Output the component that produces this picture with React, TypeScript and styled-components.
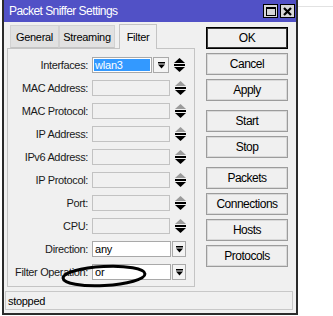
import styled, { createGlobalStyle } from "styled-components";

const GlobalStyle = createGlobalStyle`
  html, body {
    margin: 0;
    padding: 0;
    background: #ffffff;
  }
  body {
    font-family: "Liberation Sans", Arial, sans-serif;
    font-size: 11px;
    color: #000;
  }
`;

type FieldRow = {
  label: string;
  kind: "select" | "text" | "empty";
  value?: string;
  highlighted?: boolean;
  arrows?: "active" | "dim" | null;
};

const rows: FieldRow[] = [
  { label: "Interfaces:", kind: "select", value: "wlan3", highlighted: true, arrows: "active" },
  { label: "MAC Address:", kind: "empty", arrows: "dim" },
  { label: "MAC Protocol:", kind: "empty", arrows: "dim" },
  { label: "IP Address:", kind: "empty", arrows: "dim" },
  { label: "IPv6 Address:", kind: "empty", arrows: "dim" },
  { label: "IP Protocol:", kind: "empty", arrows: "dim" },
  { label: "Port:", kind: "empty", arrows: "dim" },
  { label: "CPU:", kind: "empty", arrows: "dim" },
  { label: "Direction:", kind: "text", value: "any", arrows: null },
  { label: "Filter Operation:", kind: "text", value: "or", arrows: null },
];

const buttonGroups = [
  ["OK", "Cancel", "Apply"],
  ["Start", "Stop"],
  ["Packets", "Connections", "Hosts", "Protocols"],
];

const DropIcon = () => (
  <svg width="7" height="7" viewBox="0 0 7 7">
    <rect x="0" y="0" width="7" height="1.5" fill="#000" />
    <polygon points="0,2.5 7,2.5 3.5,6.5" fill="#000" />
  </svg>
);

const UpDown = ({ dim }: { dim: boolean }) => (
  <svg width="11" height="14" viewBox="0 0 11 14">
    <polygon points="5.5,0 11,5 0,5" fill={dim ? "#9b9b9b" : "#000"} />
    <rect x="0" y="6" width="11" height="2" fill="#000" />
    <polygon points="0,9 11,9 5.5,14" fill="#000" />
  </svg>
);

export default function App() {
  return (
    <>
      <GlobalStyle />
      <Page>
        <Window>
          <TitleBar>
            <Title>Packet Sniffer Settings</Title>
            <TitleButtons>
              <TitleButton>
                <svg width="10" height="9" viewBox="0 0 10 9">
                  <rect x="0.5" y="1" width="9" height="7.5" fill="none" stroke="#000" strokeWidth="1" />
                  <rect x="0" y="0" width="10" height="2" fill="#000" />
                </svg>
              </TitleButton>
              <TitleButton>
                <svg width="9" height="9" viewBox="0 0 9 9">
                  <path d="M1 1 L8 8 M8 1 L1 8" stroke="#000" strokeWidth="2.2" />
                </svg>
              </TitleButton>
            </TitleButtons>
          </TitleBar>

          <Body>
            <LeftCol>
              <TabRow>
                <Tab $w={49}>General</Tab>
                <Tab $w={56}>Streaming</Tab>
                <Tab $w={38} $active>Filter</Tab>
              </TabRow>
              <Panel>
                {rows.map((r) => (
                  <Row key={r.label}>
                    <Label>{r.label}</Label>
                    {r.kind === "select" && (
                      <>
                        <Input $w={60} $bg="#3399ff" $hl>{r.value}</Input>
                        <DropButton $w={16}>
                          <DropIcon />
                        </DropButton>
                      </>
                    )}
                    {r.kind === "text" && (
                      <>
                        <Input $w={79} $bg="#ffffff">{r.value}</Input>
                        <DropButton $w={14}>
                          <DropIcon />
                        </DropButton>
                      </>
                    )}
                    {r.kind === "empty" && <Input $w={78} $bg="#f0f0f0" $muted />}
                    {r.arrows && (
                      <Arrows>
                        <UpDown dim={r.arrows === "dim"} />
                      </Arrows>
                    )}
                  </Row>
                ))}
              </Panel>
            </LeftCol>

            <RightCol>
              {buttonGroups.map((g, i) => (
                <ButtonGroup key={i}>
                  {g.map((b) => (
                    <Button key={b} $default={b === "OK"}>
                      {b}
                    </Button>
                  ))}
                </ButtonGroup>
              ))}
            </RightCol>
          </Body>

          <StatusBar>stopped</StatusBar>

          {/* hand-drawn annotation around Filter Operation */}
          <Mark width="88" height="26" viewBox="0 0 88 26">
            <ellipse cx="44" cy="13" rx="41" ry="9.5" fill="none" stroke="#000" strokeWidth="3" transform="rotate(-3 44 13)" />
          </Mark>
        </Window>
        <Outside />
      </Page>
    </>
  );
}

const Page = styled.div`
  display: flex;
  align-items: flex-start;
  padding-left: 2px;
  width: 333px;
  height: 316px;
  box-sizing: border-box;
`;

const Window = styled.div`
  position: relative;
  width: 296px;
  height: 315px;
  box-sizing: border-box;
  background: #f0f0f0;
  border-left: 2px solid #2b2b2b;
  border-right: 2px solid #2b2b2b;
  border-bottom: 2px solid #2b2b2b;
  display: flex;
  flex-direction: column;
`;

const TitleBar = styled.div`
  height: 22px;
  background: #5151c6;
  display: flex;
  align-items: center;
  padding: 0 1px 0 5px;
`;

const Title = styled.div`
  color: #ffffff;
  font-size: 12px;
  letter-spacing: -0.55px;
  white-space: nowrap;
`;

const TitleButtons = styled.div`
  margin-left: auto;
  display: flex;
  gap: 2px;
  align-self: flex-start;
  margin-top: 4px;
`;

const TitleButton = styled.div`
  width: 15px;
  height: 14px;
  box-sizing: border-box;
  background: #d6d6d6;
  border: 1px solid #000;
  display: flex;
  align-items: center;
  justify-content: center;
`;

const Body = styled.div`
  display: flex;
  gap: 11px;
  padding: 0 0 0 3px;
`;

const LeftCol = styled.div`
  width: 188px;
  display: flex;
  flex-direction: column;
`;

const TabRow = styled.div`
  height: 26px;
  display: flex;
  align-items: flex-end;
  padding-left: 3px;
`;

const Tab = styled.div<{ $w: number; $active?: boolean }>`
  width: ${(p) => p.$w}px;
  height: ${(p) => (p.$active ? 25 : 23)}px;
  margin-left: ${(p) => (p.$active ? 4 : 0)}px;
  margin-bottom: ${(p) => (p.$active ? -1 : 0)}px;
  box-sizing: border-box;
  background: ${(p) => (p.$active ? "#f0f0f0" : "#e1e1e1")};
  border: 1px solid ${(p) => (p.$active ? "#c4c4c4" : "#d2d2d2")};
  border-bottom: ${(p) => (p.$active ? "none" : "1px solid #c4c4c4")};
  display: flex;
  align-items: center;
  justify-content: center;
  letter-spacing: -0.3px;
  position: relative;
  z-index: 1;
`;

const Panel = styled.div`
  height: 239px;
  box-sizing: border-box;
  border: 1px solid #c4c4c4;
  background: #f0f0f0;
  padding-top: 8px;
  display: flex;
  flex-direction: column;
  gap: 7px;
`;

const Row = styled.div`
  height: 16px;
  display: flex;
  align-items: center;
`;

const Label = styled.div`
  width: 80px;
  text-align: right;
  letter-spacing: -0.35px;
  white-space: nowrap;
  margin-right: 4px;
  color: #1a1a1a;
`;

const Input = styled.div<{ $w: number; $bg: string; $hl?: boolean; $muted?: boolean }>`
  width: ${(p) => p.$w}px;
  height: 16px;
  box-sizing: border-box;
  background: ${(p) => p.$bg};
  border: 1px solid ${(p) => (p.$muted ? "#c2c2c2" : "#a9a9a9")};
  box-shadow: ${(p) => (p.$hl ? "inset 0 0 0 1px #ffffff" : "none")};
  color: ${(p) => (p.$hl ? "#ffffff" : "#000000")};
  padding-left: 2px;
  line-height: 14px;
  letter-spacing: -0.2px;
`;

const DropButton = styled.div<{ $w: number }>`
  width: ${(p) => p.$w}px;
  height: 16px;
  margin-left: 1px;
  box-sizing: border-box;
  background: #f4f4f4;
  border: 1px solid #a9a9a9;
  display: flex;
  align-items: center;
  justify-content: center;
`;

const Arrows = styled.div`
  margin-left: 5px;
  display: flex;
  align-items: center;
`;

const RightCol = styled.div`
  display: flex;
  flex-direction: column;
  gap: 9px;
  padding-top: 5px;
`;

const ButtonGroup = styled.div`
  display: flex;
  flex-direction: column;
  gap: 4px;
`;

const Button = styled.div<{ $default?: boolean }>`
  width: 82px;
  height: 22px;
  box-sizing: border-box;
  background: #f0f0f0;
  border: 1px solid ${(p) => (p.$default ? "#000000" : "#9c9c9c")};
  box-shadow: inset 0 0 0 1px ${(p) => (p.$default ? "#3a3a3a" : "#d9d9d9")};
  display: flex;
  align-items: center;
  justify-content: center;
  font-size: 12px;
  letter-spacing: -0.5px;
`;

const StatusBar = styled.div`
  margin: 4px 3px 0 1px;
  height: 19px;
  box-sizing: border-box;
  border: 1px solid #c8c8c8;
  padding-left: 2px;
  display: flex;
  align-items: center;
  letter-spacing: -0.3px;
`;

const Mark = styled.svg`
  position: absolute;
  left: 56px;
  top: 263px;
  pointer-events: none;
`;

const Outside = styled.div`
  flex: 1;
  margin-top: 6px;
  border-top: 1px solid #e2e2e2;
`;
